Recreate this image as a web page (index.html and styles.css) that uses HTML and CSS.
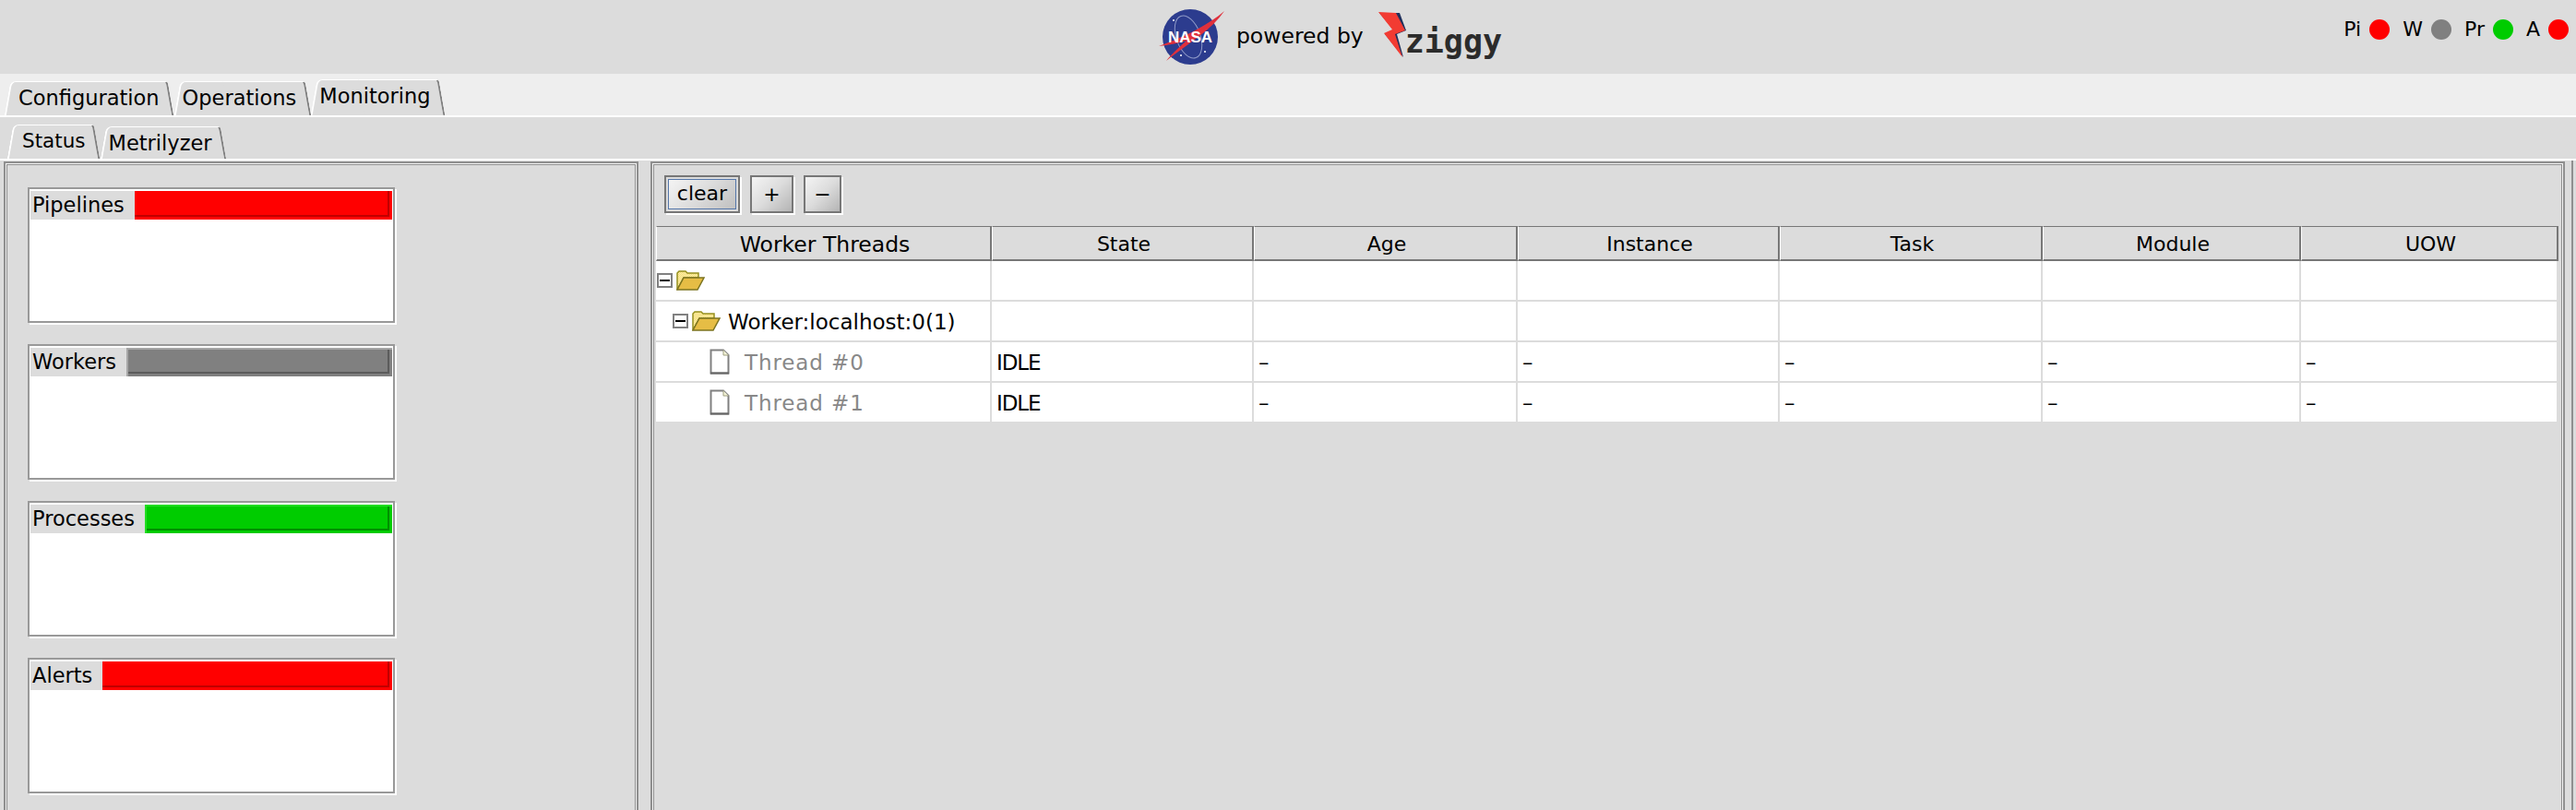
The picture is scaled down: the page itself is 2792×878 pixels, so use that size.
FILE: index.html
```html
<!DOCTYPE html>
<html lang="en">
<head>
    <meta charset="UTF-8">
    <title>Ziggy Console</title>
    <link rel="stylesheet" href="styles.css">
</head>
<body>
    <header class="top-bar">
        <div></div>
        <div class="brand">
            <svg class="nasa-logo" width="72" height="64" viewBox="0 0 72 64">
                <circle cx="34" cy="32" r="30" fill="#2c3c8e"/>
                <ellipse cx="32" cy="32" rx="13" ry="24" fill="none" stroke="#8f9ac8" stroke-width="1" transform="rotate(-20 32 32)"/>
                <path d="M0 42 C22 34 50 22 71 4 C56 26 30 40 8 58 C18 46 24 42 30 36 C20 39 10 41 0 42Z" fill="#e0303c"/>
                <circle cx="16" cy="14" r="1" fill="#fff"/>
                <circle cx="50" cy="48" r="1" fill="#fff"/>
                <circle cx="24" cy="52" r="1" fill="#fff"/>
                <text class="nasa-text" x="34" y="38" text-anchor="middle">NASA</text>
            </svg>
            <span class="powered">powered by</span>
            <div class="ziggy">
                <svg class="bolt" width="34" height="50" viewBox="0 0 34 50">
                    <path d="M1 1 L23 1 L30 20 L20 24 L27 49 L7 24 L17 20Z" fill="#20305c"/>
                    <path d="M0 0 L19 1 L29 20 L18 24 L26 49 L6 23 L15 19Z" fill="#f23b32"/>
                </svg>
                <span class="ziggy-name">ziggy</span>
            </div>
        </div>
        <div class="status-lights">
            <span>Pi</span><i class="dot red"></i>
            <span>W</span><i class="dot gray"></i>
            <span>Pr</span><i class="dot green"></i>
            <span>A</span><i class="dot red"></i>
        </div>
    </header>

    <nav class="tabs tabs-main">
        <div class="tab">Configuration</div>
        <div class="tab">Operations</div>
        <div class="tab active">Monitoring</div>
    </nav>
    <nav class="tabs tabs-sub">
        <div class="tab active">Status</div>
        <div class="tab">Metrilyzer</div>
    </nav>

    <main class="content">
        <section class="panel panel-left">
            <div class="card">
                <div class="card-head"><span class="card-label">Pipelines</span><span class="indicator ind-red"></span></div>
            </div>
            <div class="card">
                <div class="card-head"><span class="card-label">Workers</span><span class="indicator ind-gray"></span></div>
            </div>
            <div class="card">
                <div class="card-head"><span class="card-label">Processes</span><span class="indicator ind-green"></span></div>
            </div>
            <div class="card">
                <div class="card-head"><span class="card-label">Alerts</span><span class="indicator ind-red"></span></div>
            </div>
        </section>

        <section class="panel panel-right">
            <svg width="0" height="0" class="defs">
                <defs>
                    <pattern id="check" width="2" height="2" patternUnits="userSpaceOnUse">
                        <rect width="2" height="2" fill="#fff3a8"/>
                        <rect width="1" height="1" fill="#f2d878"/>
                        <rect x="1" y="1" width="1" height="1" fill="#f2d878"/>
                    </pattern>
                    <symbol id="folder" viewBox="0 0 31 22">
                        <path d="M1 21 V3 L3 1 H10 L12 3 H24 V8 H8 L1 21Z" fill="url(#check)" stroke="#96901e" stroke-width="1.5"/>
                        <path d="M1 21 L8 8 H30 L23 21Z" fill="#e6bd45" stroke="#7c7420" stroke-width="1.5"/>
                    </symbol>
                    <symbol id="doc" viewBox="0 0 22 28">
                        <path d="M1.5 1.5 H15 L20.5 7 V26.5 H1.5Z" fill="#fff" stroke="#808080" stroke-width="2"/>
                        <path d="M15 1.5 V7 H20.5" fill="#f5f5d8" stroke="#a0a080" stroke-width="1"/>
                        <path d="M1 26.5 H21" stroke="#666" stroke-width="2"/>
                    </symbol>
                </defs>
            </svg>
            <div class="toolbar">
                <button class="btn btn-focus"><span>clear</span></button>
                <button class="btn btn-plus"><span>+</span></button>
                <button class="btn btn-minus"><span>&minus;</span></button>
            </div>
            <table class="threads">
                <colgroup>
                    <col class="col-tree"><col class="col-state"><col class="col-age"><col class="col-inst">
                    <col class="col-task"><col class="col-mod"><col class="col-uow">
                </colgroup>
                <thead>
                    <tr>
                        <th class="th-tree">Worker Threads</th><th>State</th><th>Age</th><th>Instance</th><th>Task</th><th>Module</th><th>UOW</th>
                    </tr>
                </thead>
                <tbody>
                    <tr>
                        <td class="tree lvl0"><span class="node"><i class="expander"></i><svg class="ico-folder"><use href="#folder"/></svg></span></td>
                        <td></td><td></td><td></td><td></td><td></td><td></td>
                    </tr>
                    <tr>
                        <td class="tree lvl1"><span class="node"><i class="expander"></i><svg class="ico-folder"><use href="#folder"/></svg><span class="node-text">Worker:localhost:0(1)</span></span></td>
                        <td></td><td></td><td></td><td></td><td></td><td></td>
                    </tr>
                    <tr>
                        <td class="tree lvl2"><span class="node"><svg class="ico-doc"><use href="#doc"/></svg><span class="node-text muted">Thread #0</span></span></td>
                        <td>IDLE</td><td>&ndash;</td><td>&ndash;</td><td>&ndash;</td><td>&ndash;</td><td>&ndash;</td>
                    </tr>
                    <tr>
                        <td class="tree lvl2"><span class="node"><svg class="ico-doc"><use href="#doc"/></svg><span class="node-text muted">Thread #1</span></span></td>
                        <td>IDLE</td><td>&ndash;</td><td>&ndash;</td><td>&ndash;</td><td>&ndash;</td><td>&ndash;</td>
                    </tr>
                </tbody>
            </table>
        </section>
    </main>
</body>
</html>
```

FILE: styles.css
```css
html, body {
    margin: 0;
    padding: 0;
    height: 878px;
    overflow: hidden;
}

body {
    background-color: #dcdcdc;
    color: #000;
    font-family: "DejaVu Sans", Verdana, sans-serif;
    font-size: 21px;
}

/* top bar */
.top-bar {
    display: grid;
    grid-template-columns: 1fr auto 1fr;
    align-items: center;
    height: 80px;
}

.brand {
    display: flex;
    align-items: center;
    padding-left: 92px;
}

.nasa-logo {
    margin-right: 12px;
}

.nasa-text {
    fill: #fff;
    font-family: "Liberation Sans", sans-serif;
    font-weight: bold;
    font-size: 17px;
}

.powered {
    font-size: 23.5px;
    margin-right: 16px;
    position: relative;
    top: -1px;
}

.ziggy {
    display: flex;
    align-items: flex-end;
    height: 50px;
    margin-bottom: 4px;
}

.bolt {
    margin-right: -5px;
}

.ziggy-name {
    font-family: "DejaVu Sans Mono", monospace;
    font-weight: bold;
    font-size: 35px;
    line-height: 30px;
    color: #2b2b2b;
    margin-bottom: 3px;
}

.status-lights {
    display: flex;
    align-items: center;
    justify-content: flex-end;
    padding: 0 8px 17px 0;
    font-size: 22px;
}

.dot {
    width: 22px;
    height: 22px;
    border-radius: 50%;
    margin: 0 14px 0 9px;
}

.dot:last-child {
    margin-right: 0;
}

.red { background-color: #ff0000; }
.gray { background-color: #808080; }
.green { background-color: #00cc00; }

/* tabs */
.tabs {
    display: flex;
    align-items: flex-end;
    box-sizing: border-box;
    border-bottom: 2px solid #fff;
}

.tabs-main {
    height: 47px;
    padding-left: 5px;
    background-color: #eeeeee;
}

.tabs-sub {
    height: 47px;
    padding-left: 8px;
}

.tab {
    position: relative;
    z-index: 0;
    height: 37px;
    line-height: 37px;
    padding: 0 16px 0 9px;
    font-size: 22.5px;
    white-space: nowrap;
}

.tab:first-child {
    padding-left: 15px;
}

.tab::before,
.tab::after {
    content: "";
    position: absolute;
    z-index: -1;
    top: 0;
    bottom: 0;
    width: 60%;
    background-color: #dcdcdc;
    box-sizing: border-box;
    border-top: 1px solid #fff;
}

.tab::before {
    left: 3px;
    border-left: 2px solid #fff;
    border-top-left-radius: 6px;
    transform: skewX(-10deg);
}

.tab::after {
    right: 3px;
    border-right: 2px solid #808080;
    border-top-right-radius: 4px;
    transform: skewX(10deg);
}

.tabs-main .tab.active {
    height: 39px;
    line-height: 36px;
    padding-left: 9px;
}

.tabs-sub .tab {
    height: 35px;
    line-height: 37px;
}

.tabs-sub .tab.active {
    height: 37px;
    line-height: 36px;
    padding-left: 16px;
    font-size: 21.5px;
}

/* panels */
.content {
    display: flex;
    padding: 1px 7px 0 4px;
    margin-right: 3px;
    gap: 13px;
    height: 800px;
    border-right: 2px solid #8f8f8f;
}

.panel {
    box-sizing: border-box;
    border: 2px solid #8f8f8f;
    border-bottom: none;
    box-shadow: inset 0 0 0 1px #f4f4f4, inset 0 0 0 2px #8f8f8f;
    height: 720px;
}

.panel-left {
    width: 688px;
    flex: none;
    padding: 26px 0 0 24px;
}

.panel-right {
    flex: 1;
    padding: 13px 0 0 4px;
}

.defs {
    position: absolute;
}

/* status cards */
.card {
    box-sizing: border-box;
    width: 398px;
    height: 147px;
    margin-bottom: 23px;
    border: 2px solid #999;
    background-color: #fff;
    padding: 1px 0 0 1px;
    box-shadow: 2px 2px 0 #fff;
}

.card-head {
    display: flex;
    height: 31px;
    margin-top: 1px;
}

.card-label {
    background-color: #dcdcdc;
    line-height: 31px;
    padding: 0 11px 0 2px;
    font-size: 22.5px;
}

.indicator {
    flex: 1;
    margin-right: 1px;
}

.ind-red {
    background-color: #ff0000;
    box-shadow: inset -3px -3px 0 0 #ff0000, inset -5px -5px 0 0 #c00000;
}

.ind-gray {
    background-color: #808080;
    box-shadow: inset 2px 2px 0 0 #a6a6a6, inset -3px -3px 0 0 #808080, inset -5px -5px 0 0 #5c5c5c;
}

.ind-green {
    background-color: #00cc00;
    box-shadow: inset 2px 2px 0 0 #22dd22, inset -3px -3px 0 0 #00cc00, inset -5px -5px 0 0 #009000;
}

/* toolbar */
.toolbar {
    display: flex;
    gap: 11px;
    padding-left: 9px;
    height: 42px;
    margin-bottom: 13px;
}

.btn {
    box-sizing: border-box;
    height: 41px;
    padding: 0;
    border: 2px solid #777;
    background: linear-gradient(135deg, #f4f4f4, #dcdcdc 50%, #b4b4b4);
    box-shadow: 2px 2px 0 #fff;
    font-family: inherit;
    font-size: 22px;
    color: #000;
}

.btn-focus {
    width: 82px;
    padding: 2px;
    background: #dcdcdc;
}

.btn-focus span {
    display: block;
    height: 31px;
    line-height: 30px;
    border: 1px solid #5577aa;
    background: linear-gradient(135deg, #f4f4f4, #dcdcdc 50%, #c0c0c0);
}

.btn-plus { width: 47px; }
.btn-minus { width: 41px; }

/* thread table */
.threads {
    table-layout: fixed;
    border-collapse: separate;
    border-spacing: 0;
    width: 2062px;
    background-color: #fff;
}

.col-tree { width: 364px; }
.col-state { width: 284px; }
.col-age { width: 286px; }
.col-inst { width: 284px; }
.col-task { width: 285px; }
.col-mod { width: 280px; }
.col-uow { width: 279px; }

.threads th {
    box-sizing: border-box;
    height: 38px;
    padding: 2px 0 0 3px;
    background-color: #dcdcdc;
    border-top: 1px solid #777;
    border-left: 1px solid #fff;
    border-right: 2px solid #777;
    border-bottom: 2px solid #777;
    font-weight: normal;
    font-size: 22px;
}

.threads th.th-tree {
    font-size: 23.5px;
}

.threads td {
    box-sizing: border-box;
    height: 44px;
    padding: 2px 0 0 5px;
    border-right: 2px solid #dcdcdc;
    border-bottom: 2px solid #dcdcdc;
    font-size: 23px;
    letter-spacing: -1.1px;
    white-space: nowrap;
}

.threads td.tree {
    padding-top: 0;
    letter-spacing: normal;
}

.threads td.lvl0 { padding-left: 1px; }
.threads td.lvl1 { padding-left: 18px; }
.threads td.lvl2 { padding-left: 58px; }

.node {
    display: flex;
    align-items: center;
}

.expander {
    position: relative;
    box-sizing: border-box;
    width: 17px;
    height: 16px;
    border: 2px solid #808080;
    margin-right: 4px;
    background-color: #fff;
}

.expander::after {
    content: "";
    position: absolute;
    left: 1px;
    right: 1px;
    top: 5px;
    height: 2px;
    background-color: #000;
}

.ico-folder {
    width: 31px;
    height: 22px;
}

.ico-doc {
    width: 22px;
    height: 28px;
}

.node-text {
    margin-left: 8px;
    padding-top: 2px;
    font-size: 23px;
}

.lvl2 .node-text {
    margin-left: 16px;
    letter-spacing: 0.9px;
}

.muted {
    color: #888;
}
```
